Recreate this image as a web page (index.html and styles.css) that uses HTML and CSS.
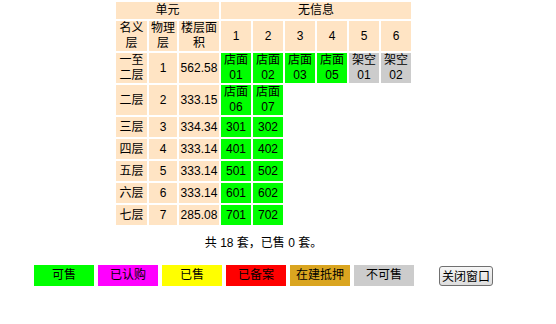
FILE: index.html
```html
<!DOCTYPE html>
<html>
<head>
<meta charset="utf-8">
<link rel="stylesheet" href="styles.css">
</head>
<body>
<div class="wrap">
  <table class="grid">
    <colgroup>
      <col class="c1"><col class="c2"><col class="c3">
      <col class="cd"><col class="cd"><col class="cd"><col class="cd"><col class="cd"><col class="cd">
    </colgroup>
    <tr class="r-head">
      <td class="hd" colspan="3">单元</td>
      <td class="hd" colspan="6">无信息</td>
    </tr>
    <tr>
      <td class="hd">名义层</td>
      <td class="hd">物理层</td>
      <td class="hd">楼层面积</td>
      <td class="hd">1</td><td class="hd">2</td><td class="hd">3</td><td class="hd">4</td><td class="hd">5</td><td class="hd">6</td>
    </tr>
    <tr>
      <td class="hd">一至二层</td><td class="hd">1</td><td class="hd">562.58</td>
      <td class="sale">店面<br>01</td><td class="sale">店面<br>02</td><td class="sale">店面<br>03</td><td class="sale">店面<br>05</td>
      <td class="nosale">架空<br>01</td><td class="nosale">架空<br>02</td>
    </tr>
    <tr>
      <td class="hd">二层</td><td class="hd">2</td><td class="hd">333.15</td>
      <td class="sale">店面<br>06</td><td class="sale">店面<br>07</td><td></td><td></td><td></td><td></td>
    </tr>
    <tr class="r-data">
      <td class="hd">三层</td><td class="hd">3</td><td class="hd">334.34</td>
      <td class="sale">301</td><td class="sale">302</td><td></td><td></td><td></td><td></td>
    </tr>
    <tr class="r-data">
      <td class="hd">四层</td><td class="hd">4</td><td class="hd">333.14</td>
      <td class="sale">401</td><td class="sale">402</td><td></td><td></td><td></td><td></td>
    </tr>
    <tr class="r-data">
      <td class="hd">五层</td><td class="hd">5</td><td class="hd">333.14</td>
      <td class="sale">501</td><td class="sale">502</td><td></td><td></td><td></td><td></td>
    </tr>
    <tr class="r-data">
      <td class="hd">六层</td><td class="hd">6</td><td class="hd">333.14</td>
      <td class="sale">601</td><td class="sale">602</td><td></td><td></td><td></td><td></td>
    </tr>
    <tr class="r-data">
      <td class="hd">七层</td><td class="hd">7</td><td class="hd">285.08</td>
      <td class="sale">701</td><td class="sale">702</td><td></td><td></td><td></td><td></td>
    </tr>
  </table>
  <p class="summary">共 18 套，已售 0 套。</p>
  <div class="legend">
    <span class="key k-sale">可售</span>
    <span class="key k-sub">已认购</span>
    <span class="key k-sold">已售</span>
    <span class="key k-rec">已备案</span>
    <span class="key k-mort">在建抵押</span>
    <span class="key k-no">不可售</span>
    <button class="close" type="button">关闭窗口</button>
  </div>
</div>
</body>
</html>
```

FILE: styles.css
```css
html, body {
  margin: 0;
  padding: 0;
  background: #ffffff;
}
body {
  font-family: "Liberation Sans", "Noto Sans CJK SC", sans-serif;
  font-size: 12px;
  color: #000000;
}
.wrap {
  width: 527px;
  text-align: center;
}
.grid {
  width: 299px;
  margin: 0 auto;
  table-layout: fixed;
  border-collapse: separate;
  border-spacing: 2px;
}
.c1 { width: 31px; }
.c2 { width: 28px; }
.c3 { width: 40px; }
.cd { width: 30px; }
.grid td {
  padding: 0;
  line-height: 15px;
  text-align: center;
  vertical-align: middle;
  overflow: hidden;
}
.grid .hd { background: #ffe4c4; }
.grid .sale { background: #00ff00; }
.grid .nosale { background: #cccccc; }
.r-head { height: 17px; }
.r-data { height: 20px; }
.summary {
  margin: 8px 0 0;
  line-height: 16px;
}
.legend {
  display: flex;
  justify-content: center;
  align-items: center;
  gap: 4px;
  margin-top: 14px;
}
.key {
  width: 60px;
  height: 21px;
  line-height: 21px;
  text-align: center;
}
.k-sale { background: #00ff00; }
.k-sub { background: #ff00ff; }
.k-sold { background: #ffff00; }
.k-rec { background: #ff0000; }
.k-mort { background: #daa520; }
.k-no { background: #cccccc; }
.close {
  margin-left: 21px;
  height: 20px;
  padding: 0 2px;
  font-family: "Noto Sans CJK SC", sans-serif;
  font-size: 12px;
  line-height: 16px;
  color: #000000;
  background: linear-gradient(#f6f6f6, #dddddd);
  border: 1px solid #707070;
  border-radius: 3px;
}
```
